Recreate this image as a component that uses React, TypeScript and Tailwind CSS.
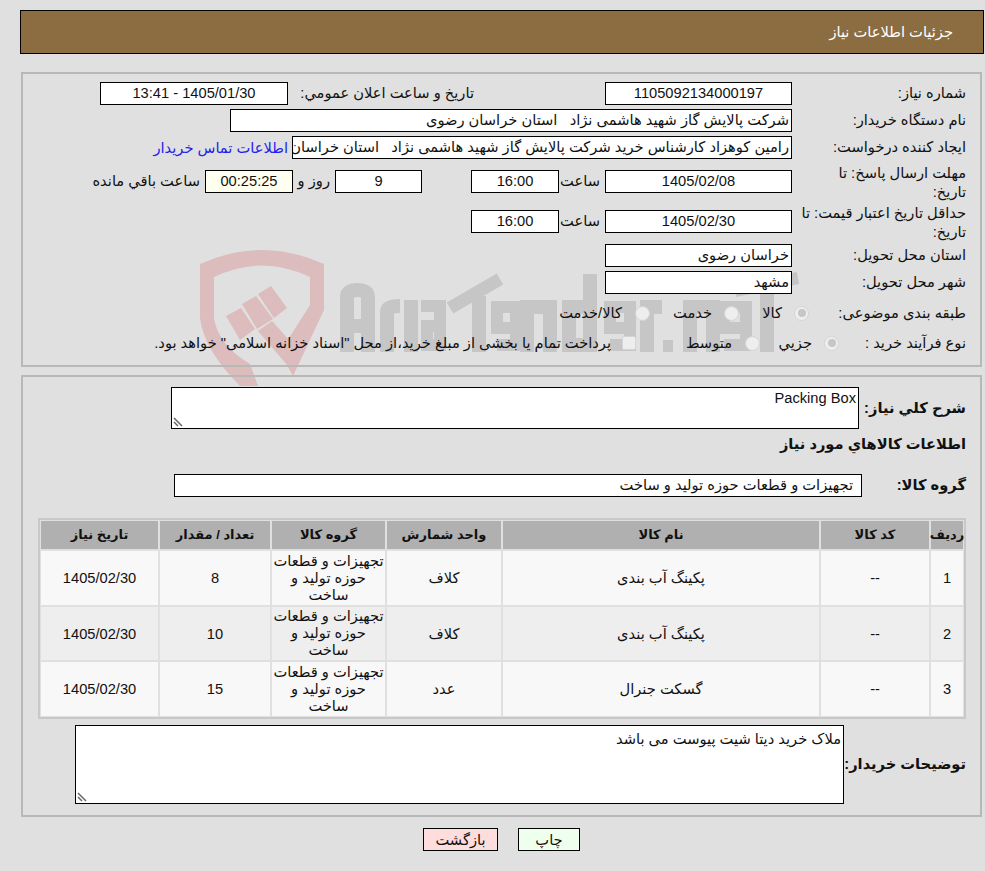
import React from 'react';

function Box({ className = '', children }: { className?: string; children?: React.ReactNode }) {
    return (
        <div className={`h-[23px] shrink-0 border border-black bg-white text-[14.67px] leading-[20px] whitespace-pre overflow-hidden ${className}`}>
            {children}
        </div>
    );
}

function Label({ className = '', children }: { className?: string; children: React.ReactNode }) {
    return <div className={`shrink-0 text-[14.67px] leading-[19px] whitespace-nowrap ${className}`}>{children}</div>;
}

function Radio({ checked }: { checked?: boolean }) {
    return (
        <span className="shrink-0 flex w-[15px] h-[15px] rounded-full border border-[#d4d4d4] bg-[#eeeeee] items-center justify-center">
            {checked && <span className="w-[8px] h-[8px] rounded-full bg-[#c6c6c6]" />}
        </span>
    );
}

function Grip() {
    return (
        <svg className="absolute left-[1px] bottom-[1px]" width="10" height="10" viewBox="0 0 10 10">
            <path d="M1 1 L9 9 M1 5 L5 9" stroke="#666" strokeWidth="1.5" fill="none" />
        </svg>
    );
}

function Watermark() {
    return (
        <div className="absolute left-[198px] top-[248px] w-[610px] h-[145px] pointer-events-none">
            <svg width="610" height="145" viewBox="198 248 610 145">
                <path d="M200 264 Q262 236 324 264 V310 L293 376 L280 352 L310 305 V277 Q262 254 214 277 V318 Q218 345 250 364 L258 386 H240 Q204 350 200 318 Z" fill="#dcbcbc" />
                <path d="M226 316 L241 308 L255 329 L240 340 Z M242 304 L256 296 L273 319 L257 329 Z M258 294 L271 286 L287 308 L274 318 Z" fill="#dcbcbc" />
                <path d="M258 331 L272 321 L300 352 L293 372 Z" fill="#dcbcbc" />
                <g fill="none" stroke="#c6c6c6" strokeWidth="14">
                    <path d="M347 352 V297 Q347 290 357 290 Q368 290 368 297 V352 M347 326 H368" />
                    <path d="M387 352 V312 Q387 306 400 306" />
                    <path d="M411 352 V300" />
                    <path d="M421 306 H440 V345 H427 V326 H440" strokeWidth="12" />
                    <path d="M479 352 V296" />
                    <path d="M450 308 L500 279" strokeWidth="13" />
                    <path d="M512 328 H497 V307 H516 V345 H497" strokeWidth="12" />
                    <path d="M527 352 V307 H550 V352" />
                    <path d="M590 274 V345 H569 V307 H590" />
                    <path d="M627 328 H610 V307 H630 V345 H610" strokeWidth="12" />
                    <path d="M647 352 V307 H662" />
                    <path d="M690 352 V307 H713 V352" />
                    <path d="M748 328 H724 V307 H746 V345 H724" strokeWidth="12" />
                    <path d="M767 352 V290" />
                    <path d="M735 291 L798 278" strokeWidth="12" />
                </g>
                <rect x="663" y="340" width="10" height="12" fill="#c6c6c6" />
            </svg>
        </div>
    );
}

const ROWS = [
    { n: '1', name: 'پکینگ آب بندی', unit: 'کلاف', qty: '8', bg: 'bg-[#f8f8f8]', h: 'h-[54px]' },
    { n: '2', name: 'پکینگ آب بندی', unit: 'کلاف', qty: '10', bg: 'bg-[#eeeeee]', h: 'h-[53px]' },
    { n: '3', name: 'گسکت جنرال', unit: 'عدد', qty: '15', bg: 'bg-[#f8f8f8]', h: 'h-[54px]' },
];

const HEADERS = ['ردیف', 'کد کالا', 'نام کالا', 'واحد شمارش', 'گروه کالا', 'تعداد / مقدار', 'تاریخ نیاز'];

export default function App() {
    return (
        <div dir="rtl" className='relative min-h-[871px] bg-[#e0e0e0] pl-[20px] pt-[10px] font-["Liberation_Sans","DejaVu_Sans",sans-serif] text-[#111]'>
            <Watermark />

            {/* Header */}
            <div className="relative h-[44px] mr-[1px] border border-black bg-[#8c6d42] text-white text-[14.67px] flex items-center pr-[30px]">
                جزئیات اطلاعات نیاز
            </div>

            {/* Top panel */}
            <div className="relative mt-[18px] ml-[1px] mr-[3px] h-[295px] border-2 border-[#b8b8b8] pt-[8px] pr-[14px]">
                <div className="flex items-center h-[23px]">
                    <Label className="w-[174px]">شماره نیاز:</Label>
                    <Box className="w-[187px] text-center">1105092134000197</Box>
                    <Label className="w-[186px] mr-[131px]">تاریخ و ساعت اعلان عمومي:</Label>
                    <Box className="w-[188px] text-center">1405/01/30 - 13:41</Box>
                </div>
                <div className="flex items-center h-[23px] mt-[4px]">
                    <Label className="w-[174px]">نام دستگاه خریدار:</Label>
                    <Box className="w-[562px] pr-[2px]">شرکت پالایش گاز شهید هاشمی نژاد   استان خراسان رضوی</Box>
                </div>
                <div className="flex items-center h-[23px] mt-[4px]">
                    <Label className="w-[174px]">ایجاد کننده درخواست:</Label>
                    <Box className="w-[500px] pr-[2px]">رامین کوهزاد کارشناس خرید شرکت پالایش گاز شهید هاشمی نژاد   استان خراسان رضوی</Box>
                    <a className="mr-[4px] text-[14.67px] text-[#2222ee] whitespace-nowrap">اطلاعات تماس خریدار</a>
                </div>
                <div className="flex items-center h-[23px] mt-[11px]">
                    <Label className="w-[174px] mt-[3px]">مهلت ارسال پاسخ: تا<br />تاریخ:</Label>
                    <Box className="w-[187px] text-center">1405/02/08</Box>
                    <Label className="w-[46px] pr-[5px]">ساعت</Label>
                    <Box className="w-[88px] text-center">16:00</Box>
                    <Box className="w-[87px] mr-[49px] text-center">9</Box>
                    <Label className="w-[42px] pr-[5px]">روز و</Label>
                    <Box className="w-[88px] text-center bg-[#fffff0]!">00:25:25</Box>
                    <Label className="mr-[5px]">ساعت باقي مانده</Label>
                </div>
                <div className="flex items-center h-[23px] mt-[17px]">
                    <Label className="w-[174px] mt-[3px]">حداقل تاریخ اعتبار قیمت: تا<br />تاریخ:</Label>
                    <Box className="w-[187px] text-center">1405/02/30</Box>
                    <Label className="w-[46px] pr-[5px]">ساعت</Label>
                    <Box className="w-[88px] text-center">16:00</Box>
                </div>
                <div className="flex items-center h-[23px] mt-[11px]">
                    <Label className="w-[174px]">استان محل تحویل:</Label>
                    <Box className="w-[187px] pr-[2px]">خراسان رضوی</Box>
                </div>
                <div className="flex items-center h-[23px] mt-[4px]">
                    <Label className="w-[174px]">شهر محل تحویل:</Label>
                    <Box className="w-[187px] pr-[2px]">مشهد</Box>
                </div>
                <div className="flex items-center h-[20px] mt-[9px]">
                    <Label className="w-[157px]">طبقه بندی موضوعی:</Label>
                    <div className="flex items-center w-[70px]"><Radio checked /><Label className="mr-[12px]">کالا</Label></div>
                    <div className="flex items-center w-[89px]"><Radio /><Label className="mr-[12px]">خدمت</Label></div>
                    <div className="flex items-center"><Radio /><Label className="mr-[13px]">کالا/خدمت</Label></div>
                </div>
                <div className="flex items-center h-[20px] mt-[10px]">
                    <Label className="w-[127px]">نوع فرآیند خرید :</Label>
                    <div className="flex items-center w-[79px]"><Radio checked /><Label className="mr-[12px]">جزيي</Label></div>
                    <div className="flex items-center w-[124px]"><Radio /><Label className="mr-[13px]">متوسط</Label></div>
                    <div className="flex items-center">
                        <span className="shrink-0 w-[14px] h-[14px] rounded-[2px] border border-[#d4d4d4] bg-[#eeeeee]" />
                        <Label className="mr-[11px]">پرداخت تمام یا بخشی از مبلغ خرید،از محل "اسناد خزانه اسلامی" خواهد بود.</Label>
                    </div>
                </div>
            </div>

            {/* Details panel */}
            <div className="relative mt-[8px] ml-[1px] mr-[3px] border-2 border-[#b8b8b8] pt-[10px] pb-[11px] pr-[14px]">
                <div className="flex items-center">
                    <Label className="w-[107px] font-bold">شرح کلي نیاز:</Label>
                    <div className="relative w-[688px] h-[42px] border border-black bg-white text-[14.67px] leading-[20px] pr-[2px]">
                        Packing Box
                        <Grip />
                    </div>
                </div>
                <Label className="font-bold mt-[5px] leading-[20px]">اطلاعات کالاهاي مورد نیاز</Label>
                <div className="flex items-center mt-[20px]">
                    <Label className="w-[104px] font-bold">گروه کالا:</Label>
                    <Box className="w-[688px] pr-[8px]">تجهیزات و قطعات حوزه تولید و ساخت</Box>
                </div>

                {/* Items table */}
                <div className="mt-[21px] w-[928px] border-2 border-[#c8c8c8] p-[1px]">
                    <div className="grid grid-cols-[32px_108px_316px_114px_113px_110px_117px] gap-[2px] text-[14.67px]">
                        {HEADERS.map((h, i) => (
                            <div key={i} className="h-[28px] bg-[#b0b0b0] flex items-center justify-center font-bold text-[13px] whitespace-nowrap">{h}</div>
                        ))}
                        {ROWS.map(r => (
                            <React.Fragment key={r.n}>
                                <div className={`${r.h} ${r.bg} flex items-center justify-center`}>{r.n}</div>
                                <div className={`${r.h} ${r.bg} flex items-center justify-center`}>--</div>
                                <div className={`${r.h} ${r.bg} flex items-center justify-center`}>{r.name}</div>
                                <div className={`${r.h} ${r.bg} flex items-center justify-center`}>{r.unit}</div>
                                <div className={`${r.h} ${r.bg} flex items-center justify-center text-center leading-[17px]`}>
                                    <span>تجهیزات و قطعات<br />حوزه تولید و<br />ساخت</span>
                                </div>
                                <div className={`${r.h} ${r.bg} flex items-center justify-center`}>{r.qty}</div>
                                <div className={`${r.h} ${r.bg} flex items-center justify-center`}>1405/02/30</div>
                            </React.Fragment>
                        ))}
                    </div>
                </div>

                <div className="flex items-center mt-[6px]">
                    <Label className="w-[122px] font-bold">توضیحات خریدار:</Label>
                    <div className="relative w-[769px] h-[79px] border border-black bg-white text-[14.67px] leading-[20px] pr-[2px] pt-[3px]">
                        ملاک خرید دیتا شیت پیوست می باشد
                        <Grip />
                    </div>
                </div>
            </div>

            {/* Buttons */}
            <div className="relative flex gap-[20px] mt-[11px] mr-[405px]">
                <button className="w-[62px] h-[23px] border border-black bg-[#eeffee] text-[14.67px]">چاپ</button>
                <button className="w-[75px] h-[23px] border border-black bg-[#ffdddd] text-[14.67px]">بازگشت</button>
            </div>
        </div>
    );
}
